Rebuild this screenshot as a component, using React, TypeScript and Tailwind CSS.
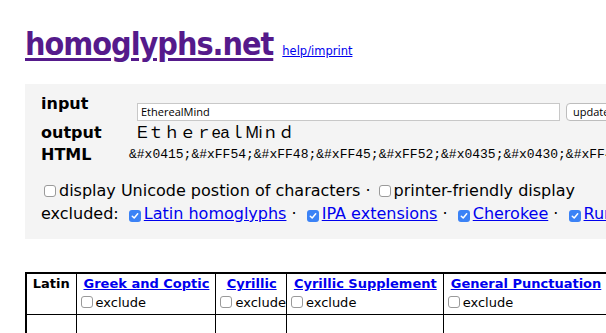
import React from 'react';

const Box = ({ checked }: { checked?: boolean }) =>
    checked ? (
        <span className="inline-flex w-[12px] h-[12px] rounded-[3px] bg-[#3b82f6] items-center justify-center ml-[5px] mr-[3px] align-[-1px]">
            <svg width="8" height="8" viewBox="0 0 8 8"><path d="M1.3 4.2 L3.2 6 L6.7 1.8" stroke="#fff" strokeWidth="1.5" fill="none" strokeLinecap="round" strokeLinejoin="round" /></svg>
        </span>
    ) : (
        <span className="inline-block w-[12px] h-[12px] rounded-[3px] border border-[#9a9a9a] bg-white ml-[3px] mr-[3px] align-[-1px]" />
    );

const excluded = ['Latin homoglyphs', 'IPA extensions', 'Cherokee', 'Runic'];

const columns = [
    { name: 'Greek and Coptic', w: 'min-w-[137px]' },
    { name: 'Cyrillic', w: '' },
    { name: 'Cyrillic Supplement', w: 'min-w-[154px]' },
    { name: 'General Punctuation', w: '' },
];

const html = '&#x0415;&#xFF54;&#xFF48;&#xFF45;&#xFF52;&#x0435;&#x0430;&#xFF4C;&#x041C;&#x0456;&#xFF4E;&#xFF44;';

export default function App() {
    return (
        <div className="w-[606px] h-[333px] overflow-hidden bg-white font-['DejaVu_Sans',sans-serif] text-black">
            <div className="w-[900px] pl-[25px]">
                <div className="flex items-baseline pt-[24px] leading-[40px]">
                    <a href="#" className="text-[32px] font-bold font-stretch-condensed tracking-[-1px] text-[#551a8b] underline decoration-[3px] underline-offset-[3px]">homoglyphs.net</a>
                    <a href="#" className="ml-[9px] text-[11.5px] text-[#0000ee] underline">help/imprint</a>
                </div>

                <div className="mt-[13px] bg-[#f4f4f4] pl-[16px] pt-[10px] pb-[14px]">
                    <div className="flex h-[29px]">
                        <div className="w-[88px] text-[16px] font-bold leading-[20px]">input</div>
                        <div className="flex items-end pb-[2px] pl-[8px]">
                            <div className="w-[423px] h-[18px] border border-[#c8c8c8] bg-white text-[11px] leading-[16px] px-[3px] font-['Open_Sans',sans-serif]">EtherealMind</div>
                            <div className="ml-[6px] h-[18px] px-[6px] rounded-[4px] border border-[#bdbdbd] bg-white text-[11px] leading-[16px] font-['Open_Sans',sans-serif]">update</div>
                        </div>
                    </div>
                    <div className="flex h-[22px]">
                        <div className="w-[88px] text-[16px] font-bold leading-[20px]">output</div>
                        <div className="pl-[8px] text-[16px] leading-[20px] font-['Liberation_Sans','Noto_Sans_CJK_JP',sans-serif] whitespace-nowrap">Еｔｈｅｒеаｌ​Міｎｄ</div>
                    </div>
                    <div className="flex h-[20px]">
                        <div className="w-[88px] text-[16px] font-bold leading-[20px]">HTML</div>
                        <div className="text-[13px] leading-[20px] font-['Liberation_Mono',monospace] whitespace-nowrap">{html}</div>
                    </div>

                    <div className="mt-[14px] text-[16px] leading-[23px] whitespace-nowrap">
                        <div>
                            <Box />display Unicode postion of characters · <Box />printer-friendly display
                        </div>
                        <div>
                            excluded:
                            {excluded.map((e, i) => (
                                <span key={e}>
                                    {i > 0 ? ' · ' : ' '}
                                    <Box checked />
                                    <a href="#" className="text-[#0000ee] underline">{e}</a>
                                </span>
                            ))}
                        </div>
                    </div>
                </div>

                <table className="mt-[33px] border-collapse border-2 border-black text-[13px] leading-[19px]">
                    <thead>
                        <tr>
                            <th className="w-[50px] border border-black align-top pt-0 pb-[2px] px-[2px] font-bold">Latin</th>
                            {columns.map((c) => (
                                <th key={c.name} className={`${c.w} border border-black align-top pt-0 pb-[2px] pl-[1px] pr-0 text-left font-normal whitespace-nowrap`}>
                                    <div className="text-center font-bold px-[6px]">
                                        <a href="#" className="text-[#0000ee] underline">{c.name}</a>
                                    </div>
                                    <div><Box />exclude</div>
                                </th>
                            ))}
                        </tr>
                    </thead>
                    <tbody>
                        <tr className="h-[40px]">
                            <td className="border border-black" />
                            {columns.map((c) => (
                                <td key={c.name} className="border border-black" />
                            ))}
                        </tr>
                    </tbody>
                </table>
            </div>
        </div>
    );
}
